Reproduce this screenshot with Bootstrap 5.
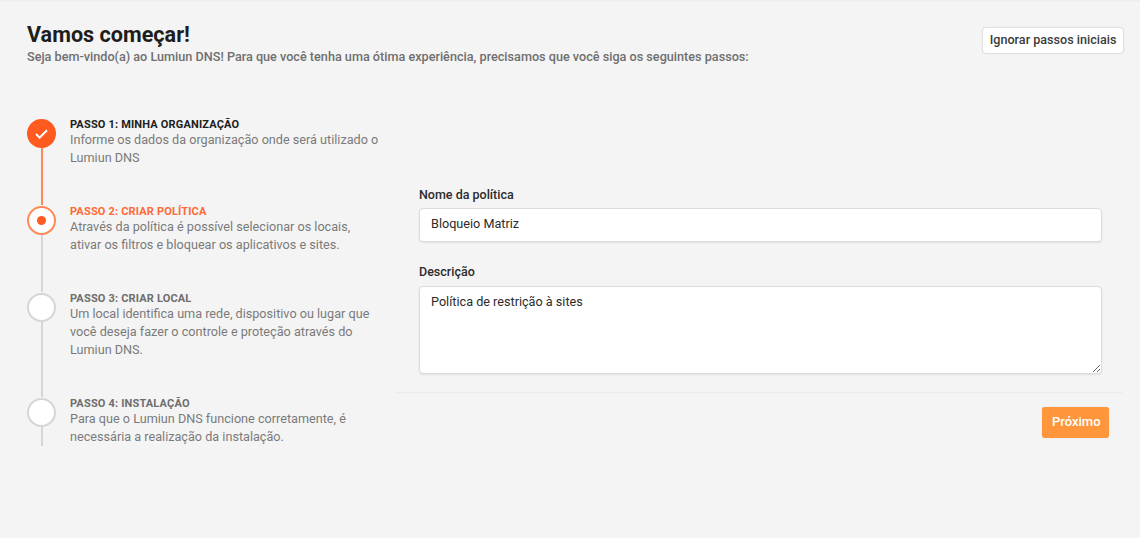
<!DOCTYPE html>
<html lang="pt-BR">
<head>
<meta charset="utf-8">
<title>Vamos começar!</title>
<link href="https://cdn.jsdelivr.net/npm/bootstrap@5.3.0/dist/css/bootstrap.min.css" rel="stylesheet">
<style>
html,body{height:100%;overflow:hidden}
body{background:#f4f4f4;font-family:Roboto,"Liberation Sans",sans-serif;color:#212121;border-top:2px solid #eeeeee}
.shell{padding:20px 17px 0 27px}
.page-title{font-size:21.6px;font-weight:700;line-height:26px;margin:0;color:#1d1d1d}
.page-sub{font-size:12.65px;font-weight:500;line-height:16px;color:#6f6f6f;margin:1px 0 0}
.skip-btn{font-size:12.6px;font-weight:500;line-height:16px;color:#3c3c3c;background:#fff;border:0;border-radius:3px;padding:4px 6.5px 5px;margin-top:6px;box-shadow:0 0 2px rgba(0,0,0,.3)}
.skip-btn:hover{background:#fff;color:#3c3c3c}
.main-row{margin-top:53px}
.steps-col{width:369px;flex:none}
.step-row{display:flex;gap:14px}
.rail{width:29px;flex:none;display:flex;flex-direction:column;align-items:center}
.dot{width:29px;height:29px;border-radius:50%;flex:none;display:flex;align-items:center;justify-content:center;background:#fff;border:2px solid #d6d6d6;margin-top:1px}
.dot-done{background:#ff5a1f;border-color:#ff5a1f}
.dot-now{border-color:#ff8a55}
.dot-now i{display:block;width:9px;height:9px;border-radius:50%;background:#ff5a1f}
.rail-line{width:2px;flex:1;background:#d6d6d6}
.rail-line-done{background:#ff8a55}
.step-body{width:312px;padding-bottom:38px}
.step-last{padding-bottom:0}
.step-head{font-size:11px;font-weight:700;line-height:13px;letter-spacing:.17px;color:#6e6e6e;margin:0}
.step-head-done{color:#212121}
.step-head-now{color:#ff6a35}
.step-text{font-size:12.65px;line-height:18px;color:#7a7a7a;margin:0}
.form-col{flex:1;min-width:0;padding-top:69px}
.form-inner{padding:0 21px 0 23px}
.lbl{font-size:12.5px;font-weight:500;line-height:16px;color:#2b2b2b;margin:0 0 5px;display:block}
.fld{font-size:12.65px;line-height:18px;color:#2b2b2b;background:#fff;border:1px solid #dcdcdc;border-radius:4px;padding:5px 11px 9px;box-shadow:0 1px 2px rgba(0,0,0,.08)}
.fld-input{height:34px}
.fld-area{height:88px;padding-top:6px}
.fld-gap{margin-top:22px;margin-bottom:6px}
.form-foot{border-top:1px solid #ebebeb;margin-top:18px;padding:14px 14px 0 0}
.next-btn{font-size:13px;font-weight:500;line-height:18px;color:#fff;background:#ff963c;border:0;border-radius:3px;padding:5px 10px 7px;height:31px;width:67px;box-shadow:0 0 1px rgba(0,0,0,.2)}
.next-btn:hover{background:#ff963c;color:#fff}
</style>
</head>
<body>
<div class="shell">
  <div class="d-flex justify-content-between align-items-start">
    <div>
      <h1 class="page-title">Vamos começar!</h1>
      <p class="page-sub">Seja bem-vindo(a) ao Lumiun DNS! Para que você tenha uma ótima experiência, precisamos que você siga os seguintes passos:</p>
    </div>
    <button type="button" class="btn skip-btn">Ignorar passos iniciais</button>
  </div>
  <div class="d-flex main-row">
    <div class="steps-col">
      <div class="step-row">
        <div class="rail">
          <span class="dot dot-done"><svg width="13" height="10" viewBox="0 0 13 10" fill="none" stroke="#fff" stroke-width="2"><path d="M1 5l3.6 3.6L12 1.2"/></svg></span>
          <span class="rail-line rail-line-done"></span>
        </div>
        <div class="step-body">
          <p class="step-head step-head-done">PASSO 1: MINHA ORGANIZAÇÃO</p>
          <p class="step-text">Informe os dados da organização onde será utilizado o Lumiun DNS</p>
        </div>
      </div>
      <div class="step-row">
        <div class="rail">
          <span class="dot dot-now"><i></i></span>
          <span class="rail-line"></span>
        </div>
        <div class="step-body">
          <p class="step-head step-head-now">PASSO 2: CRIAR POLÍTICA</p>
          <p class="step-text">Através da política é possível selecionar os locais, ativar os filtros e bloquear os aplicativos e sites.</p>
        </div>
      </div>
      <div class="step-row">
        <div class="rail">
          <span class="dot"></span>
          <span class="rail-line"></span>
        </div>
        <div class="step-body">
          <p class="step-head">PASSO 3: CRIAR LOCAL</p>
          <p class="step-text">Um local identifica uma rede, dispositivo ou lugar que você deseja fazer o controle e proteção através do Lumiun DNS.</p>
        </div>
      </div>
      <div class="step-row">
        <div class="rail">
          <span class="dot"></span>
          <span class="rail-line"></span>
        </div>
        <div class="step-body step-last">
          <p class="step-head">PASSO 4: INSTALAÇÃO</p>
          <p class="step-text">Para que o Lumiun DNS funcione corretamente, é necessária a realização da instalação.</p>
        </div>
      </div>
    </div>
    <div class="form-col">
      <form class="form-inner">
        <label class="lbl" for="nome">Nome da política</label>
        <input id="nome" class="form-control fld fld-input" type="text" value="Bloqueio Matriz">
        <label class="lbl fld-gap" for="desc">Descrição</label>
        <textarea id="desc" class="form-control fld fld-area">Política de restrição à sites</textarea>
      </form>
      <div class="form-foot d-flex justify-content-end">
        <button type="button" class="btn next-btn">Próximo</button>
      </div>
    </div>
  </div>
</div>
<script src="https://cdn.jsdelivr.net/npm/bootstrap@5.3.0/dist/js/bootstrap.bundle.min.js"></script>
</body>
</html>
